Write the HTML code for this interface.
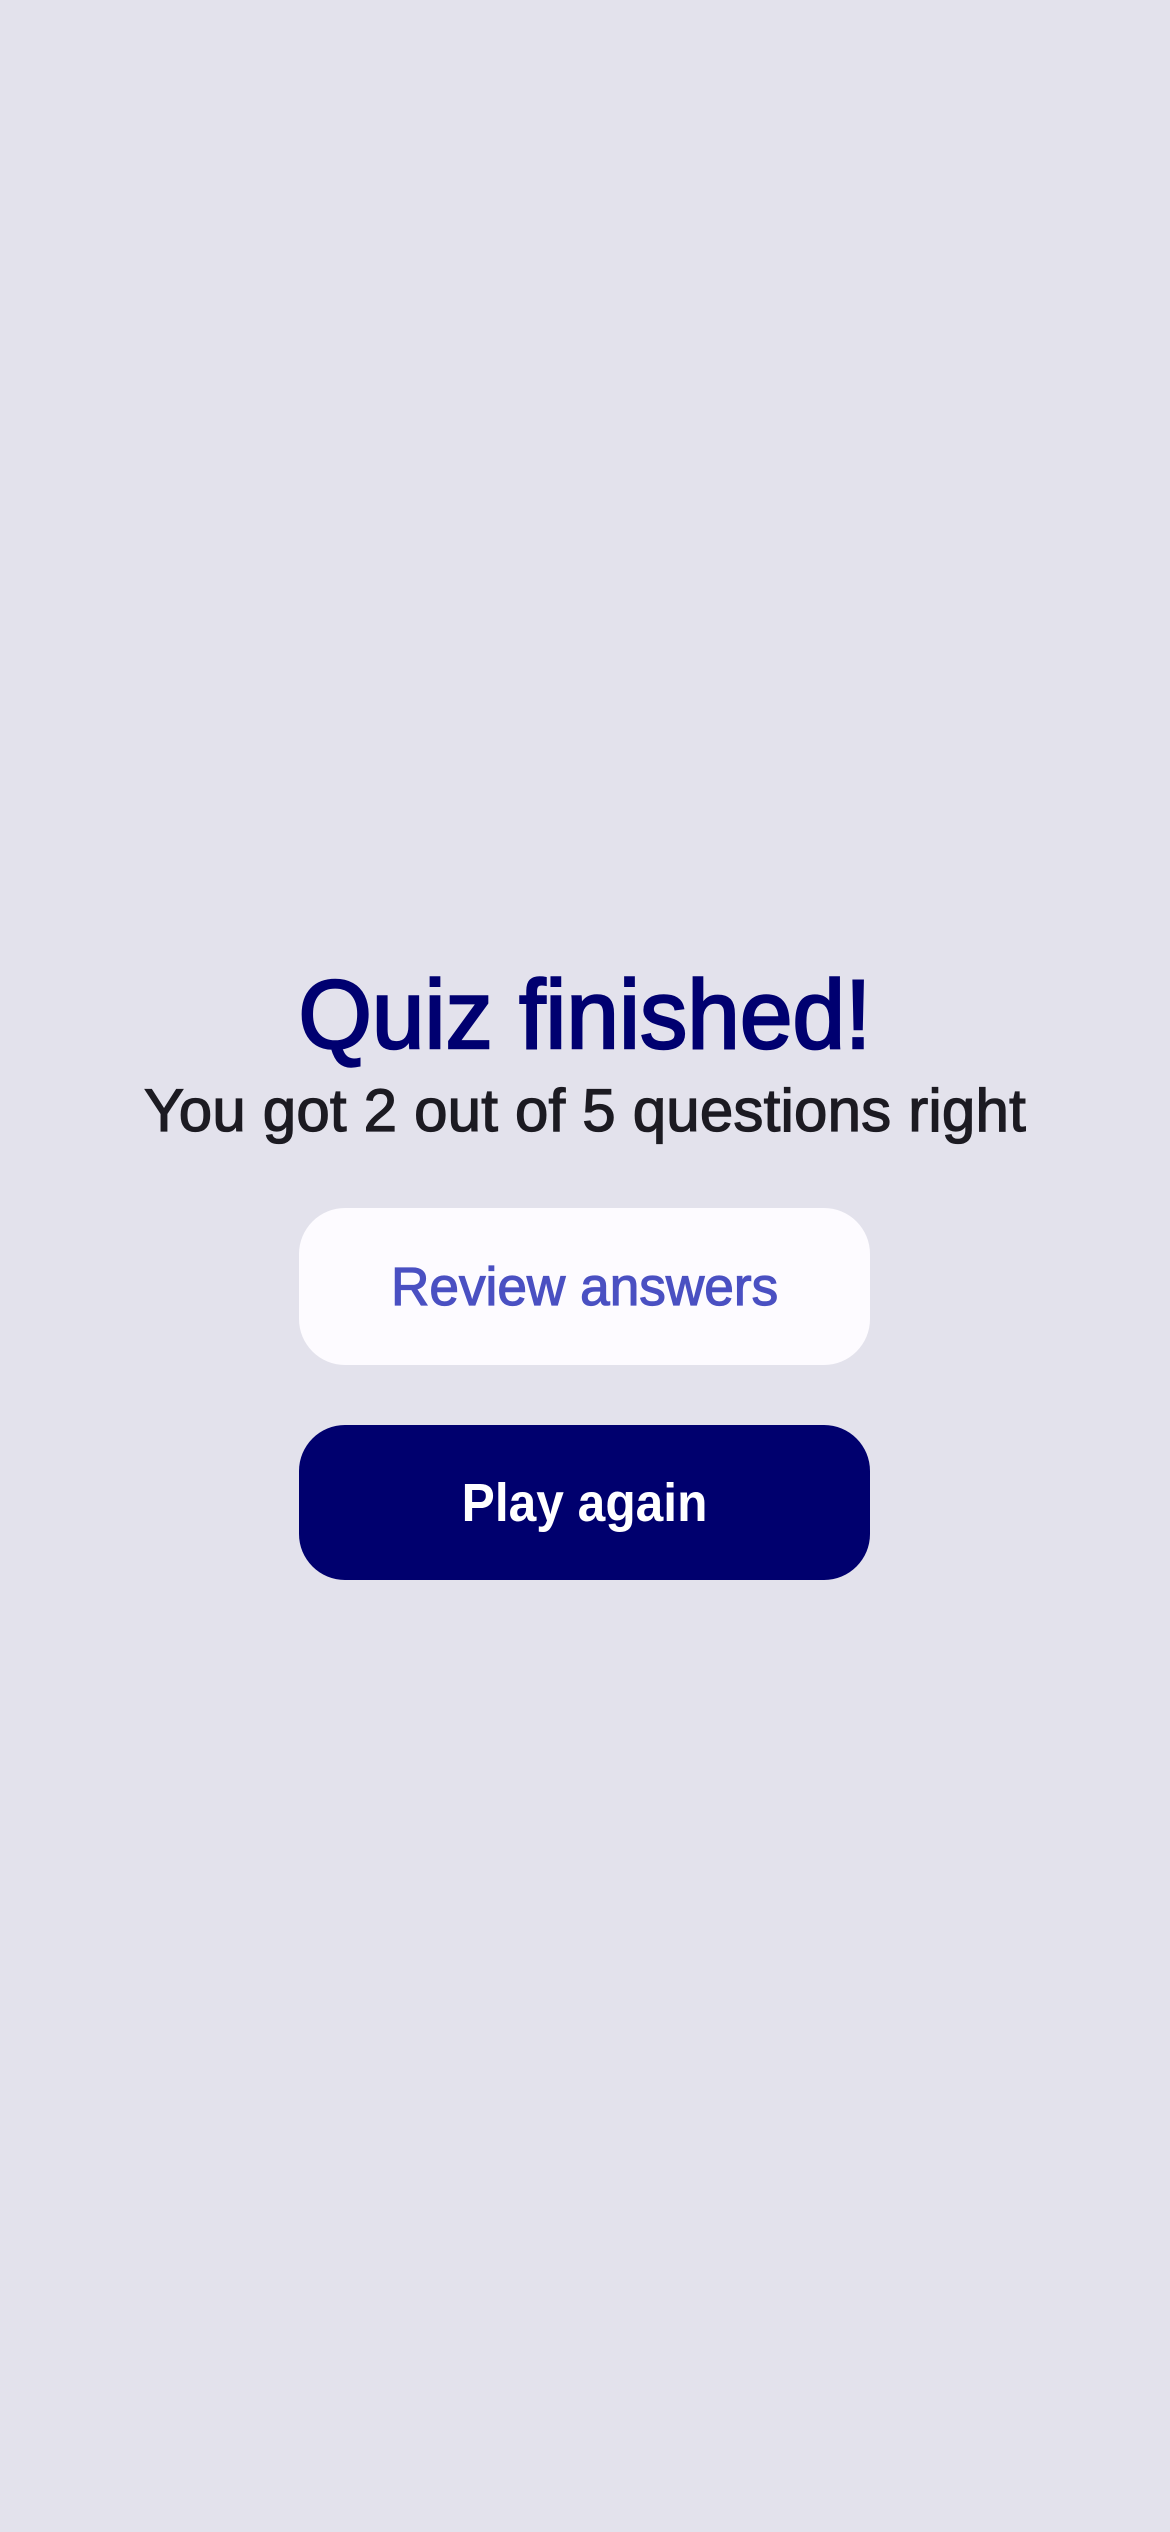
<!DOCTYPE html>
<html><head><meta charset="utf-8"><style>
html,body{margin:0;padding:0;}
body{width:1170px;height:2532px;background:#e3e2ec;position:relative;overflow:hidden;font-family:"Liberation Sans",sans-serif;}
.t{position:absolute;left:0;width:1170px;text-align:center;line-height:1;white-space:nowrap;}
#title{top:966px;font-size:97px;color:#000070;-webkit-text-stroke:2.5px #000070;}
#title span{display:inline-block;transform:scaleX(0.975);}
#sub{top:1081px;font-size:60px;color:#1c1b22;-webkit-text-stroke:1.3px #1c1b22;letter-spacing:0.2px;}
.btn{position:absolute;left:299px;width:571px;border-radius:46px;display:flex;align-items:center;justify-content:center;font-size:54px;line-height:1;}
#b1{top:1208px;height:157px;background:#fdfbff;color:#4a50c2;-webkit-text-stroke:1.2px #4a50c2;}
#b1 span{display:inline-block;transform:scaleX(0.985);}
#b2{top:1425px;height:155px;background:#00006e;color:#fff;font-weight:bold;}
#b2 span{display:inline-block;transform:scaleX(0.92);}
</style></head><body>
<div class="t" id="title"><span>Quiz finished!</span></div>
<div class="t" id="sub">You got 2 out of 5 questions right</div>
<div class="btn" id="b1"><span>Review answers</span></div>
<div class="btn" id="b2"><span>Play again</span></div>
</body></html>
